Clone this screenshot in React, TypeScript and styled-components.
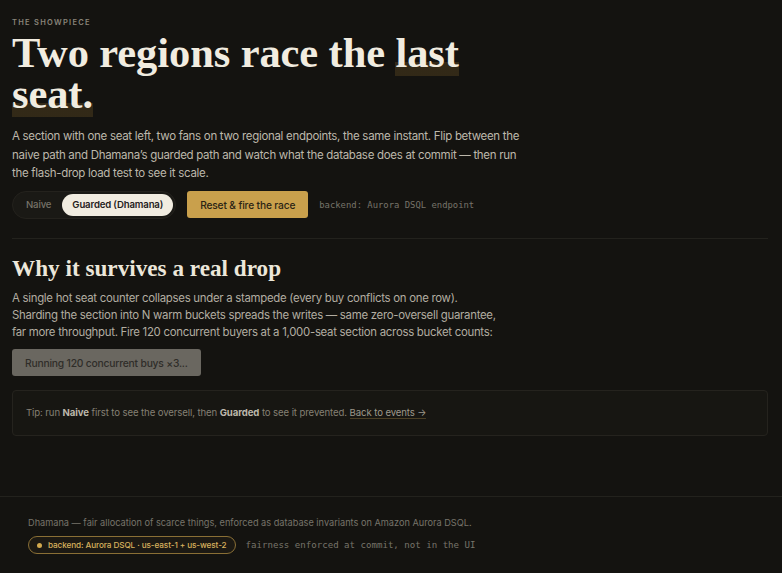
import { useState } from "react";
import styled, { createGlobalStyle } from "styled-components";

const GlobalStyle = createGlobalStyle`
  html, body {
    margin: 0;
    padding: 0;
    background: #141310;
  }
  body {
    font-family: Inter, "Noto Sans", sans-serif;
    color: #d8d3c6;
    -webkit-font-smoothing: antialiased;
  }
  * {
    box-sizing: border-box;
  }
`;

const Page = styled.div`
  min-height: 573px;
  display: flex;
  flex-direction: column;
`;

const Main = styled.main`
  padding: 18px 14px 60px 12px;
`;

const Eyebrow = styled.div`
  font-size: 7.5px;
  font-weight: 600;
  letter-spacing: 0.17em;
  text-transform: uppercase;
  color: #8a857a;
  margin-bottom: 5px;
`;

const Title = styled.h1`
  font-family: "Liberation Serif", "DejaVu Serif", serif;
  font-weight: 700;
  font-size: 42.5px;
  line-height: 41px;
  letter-spacing: -0.1px;
  color: #f1ece0;
  margin: 0 0 13px;
  max-width: 480px;
`;

const Mark = styled.span`
  background: linear-gradient(transparent 70%, rgba(120, 92, 40, 0.3) 70%);
`;

const Lead = styled.p`
  font-size: 11.5px;
  line-height: 18.5px;
  letter-spacing: -0.3px;
  color: #bdb8ab;
  margin: 0 0 8px;
  max-width: 510px;
`;

const Controls = styled.div`
  display: flex;
  align-items: center;
  gap: 11px;
`;

const Segmented = styled.div`
  display: flex;
  align-items: center;
  padding: 2px;
  border-radius: 999px;
  background: #1a1915;
  border: 1px solid #24221d;
`;

const Segment = styled.button<{ $active?: boolean }>`
  border: none;
  cursor: pointer;
  font-family: inherit;
  font-size: 9.6px;
  letter-spacing: -0.15px;
  font-weight: ${(p) => (p.$active ? 600 : 500)};
  height: 22px;
  padding: 0 ${(p) => (p.$active ? "10px" : "11px")};
  border-radius: 999px;
  background: ${(p) => (p.$active ? "#f1ece0" : "transparent")};
  color: ${(p) => (p.$active ? "#24211b" : "#78746a")};
`;

const FireButton = styled.button`
  border: none;
  cursor: pointer;
  font-family: inherit;
  font-size: 10.2px;
  letter-spacing: -0.15px;
  font-weight: 500;
  height: 27px;
  padding: 0 13px;
  border-radius: 3px;
  background: #c9a04c;
  color: #2b2414;
`;

const Mono = styled.span`
  font-family: "DejaVu Sans Mono", "Liberation Mono", monospace;
  font-size: 8.9px;
  color: #77736a;
`;

const Divider = styled.hr`
  border: none;
  border-top: 1px solid #23221d;
  margin: 19px 0 16px;
`;

const SubTitle = styled.h2`
  font-family: "Liberation Serif", "DejaVu Serif", serif;
  font-weight: 700;
  font-size: 23.2px;
  line-height: 26px;
  color: #ece7da;
  margin: 0 0 9px;
`;

const Body = styled.p`
  font-size: 11.4px;
  line-height: 17.2px;
  letter-spacing: -0.28px;
  color: #b2ada1;
  margin: 0 0 8px;
  max-width: 490px;
`;

const BusyButton = styled.button`
  display: block;
  border: none;
  font-family: inherit;
  font-size: 10.3px;
  letter-spacing: -0.2px;
  font-weight: 500;
  white-space: nowrap;
  height: 27px;
  padding: 0 13px;
  border-radius: 3px;
  background: #6a6760;
  color: #2f2d29;
  margin-bottom: 14px;
`;

const Tip = styled.div`
  border: 1px solid #25231e;
  border-radius: 4px;
  background: #171612;
  padding: 16px 13px 17px;
  font-size: 9.6px;
  letter-spacing: -0.1px;
  color: #858074;
`;

const Strong = styled.b`
  font-weight: 700;
  color: #bdb8ab;
`;

const TipLink = styled.a`
  color: #9e998c;
  text-decoration: none;
  border-bottom: 1px solid #4a3f25;
`;

const Footer = styled.footer`
  border-top: 1px solid #23221d;
  padding: 20px 28px 18px;
  display: flex;
  flex-direction: column;
  gap: 8px;
`;

const FooterNote = styled.div`
  font-size: 9.2px;
  color: #77736a;
`;

const FooterRow = styled.div`
  display: flex;
  align-items: center;
  gap: 10px;
`;

const Badge = styled.span`
  display: inline-flex;
  align-items: center;
  gap: 6px;
  height: 18px;
  padding: 0 8px;
  border-radius: 999px;
  border: 1px solid #8a6f35;
  background: #1c1913;
  font-size: 8.2px;
  letter-spacing: -0.1px;
  font-weight: 500;
  color: #d8b15e;
`;

const Dot = styled.span`
  width: 5px;
  height: 5px;
  border-radius: 50%;
  background: #d2a94e;
`;

const FooterMono = styled(Mono)`
  font-size: 9.1px;
`;

export default function App() {
  const [mode, setMode] = useState<"naive" | "guarded">("guarded");

  return (
    <Page>
      <GlobalStyle />
      <Main>
        <Eyebrow>The showpiece</Eyebrow>
        <Title>
          Two regions race the <Mark>last seat.</Mark>
        </Title>
        <Lead>
          A section with one seat left, two fans on two regional endpoints, the same instant. Flip
          between the naive path and Dhamana’s guarded path and watch what the database does at
          commit — then run the flash-drop load test to see it scale.
        </Lead>
        <Controls>
          <Segmented>
            <Segment $active={mode === "naive"} onClick={() => setMode("naive")}>
              Naive
            </Segment>
            <Segment $active={mode === "guarded"} onClick={() => setMode("guarded")}>
              Guarded (Dhamana)
            </Segment>
          </Segmented>
          <FireButton>Reset &amp; fire the race</FireButton>
          <Mono>backend: Aurora DSQL endpoint</Mono>
        </Controls>

        <Divider />

        <SubTitle>Why it survives a real drop</SubTitle>
        <Body>
          A single hot seat counter collapses under a stampede (every buy conflicts on one row).
          Sharding the section into N warm buckets spreads the writes — same zero-oversell
          guarantee, far more throughput. Fire 120 concurrent buyers at a 1,000-seat section across
          bucket counts:
        </Body>
        <BusyButton disabled>Running 120 concurrent buys ×3...</BusyButton>

        <Tip>
          Tip: run <Strong>Naive</Strong> first to see the oversell, then <Strong>Guarded</Strong>{" "}
          to see it prevented. <TipLink href="#">Back to events →</TipLink>
        </Tip>
      </Main>

      <Footer>
        <FooterNote>
          Dhamana — fair allocation of scarce things, enforced as database invariants on Amazon
          Aurora DSQL.
        </FooterNote>
        <FooterRow>
          <Badge>
            <Dot />
            backend: Aurora DSQL · us-east-1 + us-west-2
          </Badge>
          <FooterMono>fairness enforced at commit, not in the UI</FooterMono>
        </FooterRow>
      </Footer>
    </Page>
  );
}
